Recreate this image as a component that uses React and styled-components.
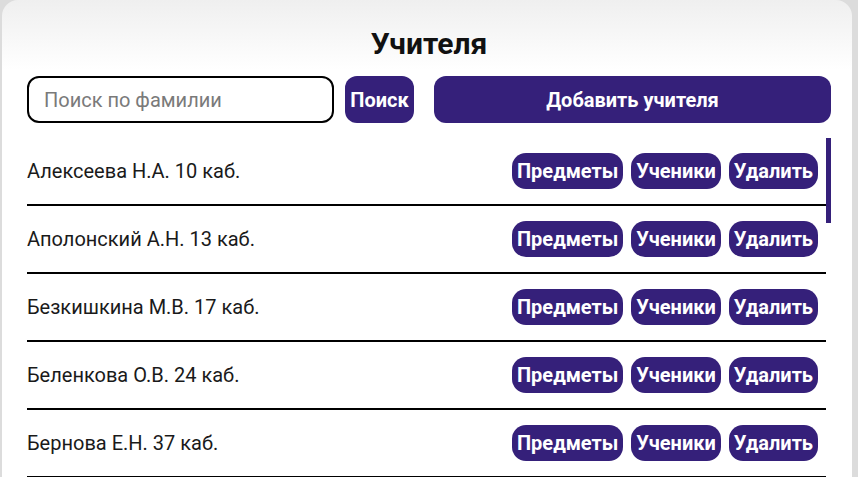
import React from "react";
import styled, { createGlobalStyle } from "styled-components";

const Global = createGlobalStyle`
  html, body { margin: 0; padding: 0; height: 100%; overflow: hidden; }
  body { background: #dcdcdc; font-family: Roboto, "Noto Sans", sans-serif; }
  #root { height: 100%; }
  * { box-sizing: border-box; }
`;

const purple = "#35207a";

const Page = styled.div`
  height: 100vh;
  padding: 0 6px 0 2px;
  display: flex;
`;

const Card = styled.div`
  flex: 1;
  display: flex;
  flex-direction: column;
  border-radius: 16px 16px 0 0;
  background: linear-gradient(to bottom, #efefef 0px, #ffffff 70px);
  padding: 0 21px 0 25px;
  min-height: 0;
`;

const Title = styled.h1`
  margin: 0;
  padding-top: 25px;
  height: 76px;
  text-align: center;
  font-size: 30px;
  line-height: 38px;
  font-weight: 700;
  color: #111;
`;

const Toolbar = styled.div`
  display: flex;
  align-items: stretch;
  height: 47px;
  gap: 11px;
`;

const SearchInput = styled.input`
  width: 307px;
  height: 47px;
  border: 2px solid #000;
  border-radius: 12px;
  padding: 0 15px;
  font-family: Roboto, sans-serif;
  font-size: 20px;
  color: #222;
  background: #fff;
  outline: none;
  &::placeholder { color: #7a7a7a; }
`;

const PurpleButton = styled.button`
  background: ${purple};
  color: #fff;
  border: none;
  font-family: Roboto, sans-serif;
  font-weight: 700;
  font-size: 20px;
  cursor: pointer;
  white-space: nowrap;
`;

const SearchButton = styled(PurpleButton)`
  width: 69px;
  border-radius: 12px;
  padding: 0;
`;

const AddButton = styled(PurpleButton)`
  flex: 1;
  margin-left: 9px;
  border-radius: 12px;
`;

const ListArea = styled.div`
  flex: 1;
  min-height: 0;
  margin-top: 15px;
  display: flex;
`;

const List = styled.div`
  flex: 1;
  overflow: hidden;
`;

const ScrollTrack = styled.div`
  width: 5px;
  flex: none;
`;

const ScrollThumb = styled.div`
  height: 85px;
  background: ${purple};
`;

const Row = styled.div`
  height: 68px;
  display: flex;
  align-items: center;
  justify-content: space-between;
  border-bottom: 2px solid #000;
  padding-right: 8px;
`;

const Name = styled.span`
  font-size: 20px;
  color: #1a1a1a;
`;

const Actions = styled.div`
  display: flex;
  gap: 8px;
`;

const RowButton = styled(PurpleButton)`
  height: 36px;
  border-radius: 14px;
  padding: 0 5px;
`;

const teachers = [
  "Алексеева Н.А. 10 каб.",
  "Аполонский А.Н. 13 каб.",
  "Безкишкина М.В. 17 каб.",
  "Беленкова О.В. 24 каб.",
  "Бернова Е.Н. 37 каб.",
  "Васильева И.П. 41 каб.",
];

export default function App() {
  return (
    <>
      <Global />
      <Page>
        <Card>
          <Title>Учителя</Title>
          <Toolbar>
            <SearchInput placeholder="Поиск по фамилии" />
            <SearchButton>Поиск</SearchButton>
            <AddButton>Добавить учителя</AddButton>
          </Toolbar>
          <ListArea>
            <List>
              {teachers.map((t) => (
                <Row key={t}>
                  <Name>{t}</Name>
                  <Actions>
                    <RowButton>Предметы</RowButton>
                    <RowButton>Ученики</RowButton>
                    <RowButton>Удалить</RowButton>
                  </Actions>
                </Row>
              ))}
            </List>
            <ScrollTrack>
              <ScrollThumb />
            </ScrollTrack>
          </ListArea>
        </Card>
      </Page>
    </>
  );
}
